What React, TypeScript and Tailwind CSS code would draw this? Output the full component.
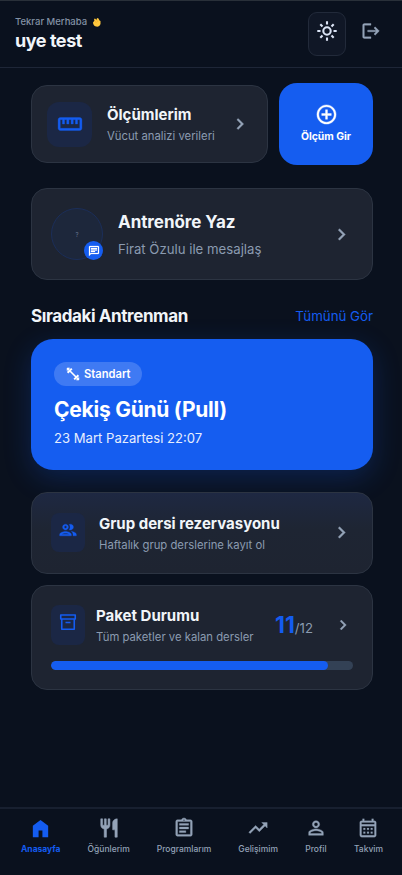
import { ReactNode } from "react"
import {
  MdAddCircleOutline,
  MdChevronRight,
  MdLogout,
  MdOutlineAssignment,
  MdOutlineCalendarMonth,
  MdOutlineChat,
  MdOutlineGroup,
  MdOutlineStraighten,
  MdPersonOutline,
  MdRestaurant,
  MdTrendingUp,
} from "react-icons/md"

function SunIcon() {
  return (
    <svg width="20" height="20" viewBox="0 0 20 20" fill="none" stroke="currentColor" strokeWidth="2.1">
      <circle cx="10" cy="10" r="3.7" />
      <path d="M10 .3v3.2M10 16.5v3.2M.3 10h3.2M16.5 10h3.2M3.3 3.3l2.2 2.2M14.5 14.5l2.2 2.2M3.3 16.7l2.2-2.2M14.5 5.5l2.2-2.2" />
    </svg>
  )
}

function WaveIcon() {
  return (
    <svg width="10" height="10" viewBox="0 0 20 20">
      <path d="M4 11 7 7 6 4l2-1 3 3 1-4 3 1 2 4 2 1v6c-1 4-5 6-9 5-4-1-6-5-6-8z" fill="#ffc83d" />
      <path d="m7 7 4 5M11 5l3 5" stroke="#e9a02b" strokeWidth="1" />
      <path d="M1 11c0 2 1 3 2 4" stroke="#58677e" strokeWidth="1.5" fill="none" />
    </svg>
  )
}

function HomeIcon() {
  return (
    <svg width="23" height="23" viewBox="0 0 24 24" fill="currentColor">
      <path d="M4 21V9l8-6 8 6v12h-6v-7h-4v7z" />
    </svg>
  )
}

function ArchiveIcon() {
  return (
    <svg width="18" height="18" viewBox="0 0 18 18" fill="none" stroke="currentColor" strokeWidth="1.6">
      <path d="M1.75 2h14.5v4H1.75zM2.75 6v10.25h12.5V6M6.5 9.5h5" strokeLinejoin="round" />
    </svg>
  )
}

function DumbbellIcon() {
  return (
    <svg width="14" height="14" viewBox="0 0 14 14" fill="none" stroke="currentColor">
      <path d="m4 4 6 6" strokeWidth="1.6" />
      <path d="M1.6 5.8 5.8 1.6M8.2 12.4l4.2-4.2" strokeWidth="2" />
      <path d="M.8 3.4 3.4.8M10.6 13.2l2.6-2.6M1 1l2.6 2.6M10.4 10.4 13 13" strokeWidth="1.3" />
    </svg>
  )
}

function NavItem({ icon, label, active }: { icon: ReactNode; label: string; active?: boolean }) {
  return (
    <button className={active ? "flex flex-col items-center text-[#145cf0] font-bold" : "flex flex-col items-center text-[#94a3b8] font-medium"}>
      <span className="h-[22px] flex items-center justify-center">{icon}</span>
      <span className="mt-1 text-[8.5px] leading-3 whitespace-nowrap">{label}</span>
    </button>
  )
}

export default function App() {
  return (
    <div className="min-h-screen flex flex-col bg-[#0a111e] font-[Inter,sans-serif] text-[#f1f5f9] [&_path[fill=none]]:stroke-none">
      <header className="h-[68px] shrink-0 border-t border-t-[#293039] border-b border-b-[#1e2637] flex items-center justify-between pl-[15px] pr-[21px]">
        <div className="pb-px">
          <p className="flex items-center gap-1 text-[9.5px] leading-[14px] font-medium text-[#8391a5]">
            Tekrar Merhaba <WaveIcon />
          </p>
          <h1 className="mt-px text-[18px] leading-[22px] font-bold tracking-[-0.45px]">uye test</h1>
        </div>
        <div className="flex items-center gap-[15px]">
          <button className="w-[38px] h-[44px] rounded-[9px] border border-[#222a3a] bg-[#101726] flex justify-center pt-2 text-[#dbe4f5]">
            <SunIcon />
          </button>
          <button className="mb-[6px] text-[#94a3b8]">
            <MdLogout size={20} stroke="currentColor" strokeWidth={0.4} />
          </button>
        </div>
      </header>

      <main className="flex-1 pl-[31px] pr-[29px] pt-[15px]">
        <div className="flex items-center gap-[11px]">
          <div className="w-[237px] h-[78px] rounded-2xl border border-[#2c3442] bg-[#1e2431] flex items-center pl-[15px] pr-4">
            <div className="w-[45px] h-[45px] shrink-0 rounded-xl bg-[#1b2745] flex items-center justify-center text-[#145cf0]">
              <MdOutlineStraighten size={26} stroke="currentColor" strokeWidth={0.3} />
            </div>
            <div className="ml-[15px] flex-1 whitespace-nowrap">
              <h2 className="mt-px text-[15px] leading-5 font-bold">Ölçümlerim</h2>
              <p className="mt-[2px] text-[11.3px] leading-[18px] text-[#8b9bb0]">Vücut analizi verileri</p>
            </div>
            <MdChevronRight size={22} className="text-[#94a3b8]" stroke="currentColor" strokeWidth={0.4} />
          </div>
          <button className="w-[94px] h-[82px] rounded-[18px] bg-[#155df0] text-white flex flex-col items-center justify-center">
            <MdAddCircleOutline size={23} stroke="currentColor" strokeWidth={0.4} />
            <span className="mt-[3px] text-[10.4px] leading-4 font-bold whitespace-nowrap">Ölçüm Gir</span>
          </button>
        </div>

        <div className="mt-[23px] h-[92px] rounded-2xl border border-[#2c3442] bg-[#1e2431] flex items-center pl-[19px] pr-[19px]">
          <div className="relative w-[52px] h-[52px] rounded-full border border-[#1b2e59] bg-[#1d273b] flex items-center justify-center text-[6px] text-[#64748b]">
            ?
            <span className="absolute -right-px -bottom-px w-[19px] h-[19px] rounded-full bg-[#155df0] text-white flex items-center justify-center">
              <MdOutlineChat size={12} stroke="currentColor" strokeWidth={0.5} />
            </span>
          </div>
          <div className="ml-[15px] flex-1">
            <h2 className="text-[17px] leading-6 font-bold tracking-[-0.05px]">Antrenöre Yaz</h2>
            <p className="mt-[5px] text-[13.2px] leading-5 text-[#8b9bb0]">Firat Özulu ile mesajlaş</p>
          </div>
          <MdChevronRight size={23} className="text-[#94a3b8]" stroke="currentColor" strokeWidth={0.4} />
        </div>

        <div className="mt-6 h-6 flex items-center justify-between">
          <h2 className="text-[17px] leading-6 font-bold tracking-[-0.4px]">Sıradaki Antrenman</h2>
          <a className="mt-0.5 text-[13.3px] text-[#145cf0]">Tümünü Gör</a>
        </div>

        <div className="mt-[11px] h-[131px] rounded-[22px] bg-[#155df0] shadow-[0_8px_28px_rgba(21,93,240,0.24)] px-[23px] pt-[23px] text-white">
          <div className="flex items-center h-6 w-[88px] rounded-full bg-[#3f7af3] pl-3 gap-1 text-[11.2px] font-semibold">
            <DumbbellIcon />
            Standart
          </div>
          <h2 className="mt-[10px] text-[21px] leading-7 font-bold tracking-[-0.25px]">Çekiş Günü (Pull)</h2>
          <p className="mt-1 text-[13.1px] leading-5 text-[#e6eefe]">23 Mart Pazartesi 22:07</p>
        </div>

        <div className="mt-[22px] h-[82px] rounded-2xl border border-[#2c3442] bg-linear-to-b from-[#1e2842] via-[#1e2533] via-45% to-[#1e2431] flex items-center pl-[19px] pr-[19px]">
          <div className="mb-px w-[34px] h-[39px] rounded-lg bg-[#1b2745] flex justify-center pt-[7px] text-[#145cf0]">
            <MdOutlineGroup size={20} stroke="currentColor" strokeWidth={0.4} />
          </div>
          <div className="ml-[14px] flex-1 whitespace-nowrap">
            <h2 className="mt-px text-[15px] leading-5 font-bold">Grup dersi rezervasyonu</h2>
            <p className="mt-[2px] text-[11.3px] leading-[18px] text-[#8b9bb0]">Haftalık grup derslerine kayıt ol</p>
          </div>
          <MdChevronRight size={23} className="mb-0.5 text-[#94a3b8]" stroke="currentColor" strokeWidth={0.4} />
        </div>

        <div className="mt-[11px] h-[105px] rounded-2xl border border-[#2c3442] bg-[#1e2431] px-[19px] pt-[19px]">
          <div className="flex items-center">
            <div className="w-[34px] h-[40px] rounded-lg bg-[#1b2745] flex justify-center pt-[8px] text-[#145cf0]">
              <ArchiveIcon />
            </div>
            <div className="ml-[11px] -mb-0.5 flex-1 whitespace-nowrap">
              <h2 className="text-[15px] leading-5 font-bold">Paket Durumu</h2>
              <p className="mt-[2px] text-[11.3px] leading-[18px] text-[#8b9bb0]">Tüm paketler ve kalan dersler</p>
            </div>
            <div className="flex items-baseline text-[13.2px] text-[#8b9bb0] mr-5">
              <span className="text-[23px] leading-7 font-bold text-[#145cf0]">11</span>/12
            </div>
            <MdChevronRight size={20} className="text-[#94a3b8]" stroke="currentColor" strokeWidth={0.4} />
          </div>
          <div className="mt-[16px] h-[9px] rounded-full bg-[#334155] overflow-hidden">
            <div className="h-full rounded-full bg-[#155df0]" style={{ width: (11 / 12) * 100 + "%" }} />
          </div>
        </div>
      </main>

      <nav className="h-[68px] shrink-0 border-t-2 border-[#182030] pl-[21px] pr-[19px] pt-2 flex items-start justify-between">
        <NavItem icon={<HomeIcon />} label="Anasayfa" active />
        <NavItem icon={<MdRestaurant size={22} stroke="currentColor" strokeWidth={0.6} />} label="Öğünlerim" />
        <NavItem icon={<MdOutlineAssignment size={22} stroke="currentColor" strokeWidth={0.4} />} label="Programlarım" />
        <NavItem icon={<MdTrendingUp size={22} stroke="currentColor" strokeWidth={0.4} />} label="Gelişimim" />
        <NavItem icon={<MdPersonOutline size={22} stroke="currentColor" strokeWidth={0.4} />} label="Profil" />
        <NavItem icon={<MdOutlineCalendarMonth size={22} stroke="currentColor" strokeWidth={0.2} />} label="Takvim" />
      </nav>
    </div>
  )
}
